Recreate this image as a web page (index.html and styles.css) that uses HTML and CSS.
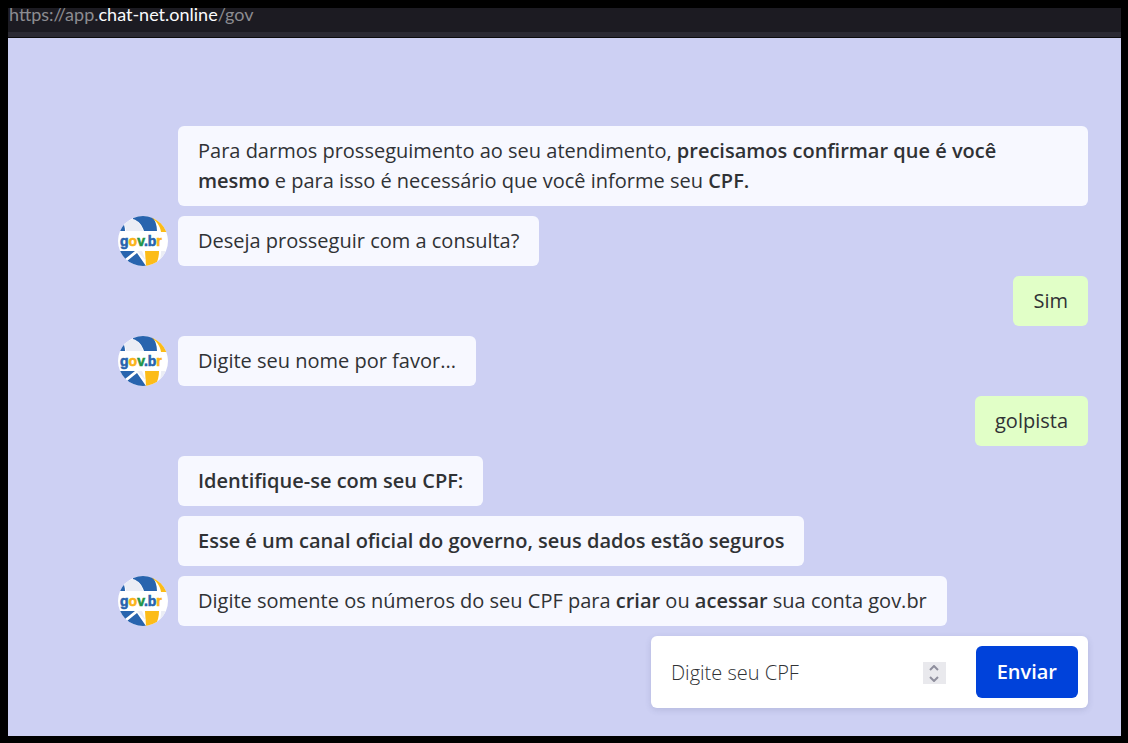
FILE: index.html
```html
<!DOCTYPE html>
<html lang="pt-BR">
<head>
<meta charset="utf-8">
<meta name="viewport" content="width=device-width, initial-scale=1">
<title>Atendimento gov.br</title>
<link rel="stylesheet" href="styles.css">
</head>
<body>
<svg class="defs" aria-hidden="true">
  <symbol id="globe" viewBox="0 0 50 50">
    <clipPath id="disc"><circle cx="25" cy="25" r="25"/></clipPath>
    <g clip-path="url(#disc)">
      <path fill="#fff" d="M0 0h50v50H0z"/>
      <path fill="#ebedf5" d="M5 7 15 3c5 2 9 7 10 12H8C8 12 7 9 5 7z"/>
      <path fill="#2864ae" d="M15 0h19c3 4 5 9 5 15H26C24 9 21 5 15 3z"/>
      <path fill="#2864ae" d="M0 6h4c2 2 3 5 3 9H0z"/>
      <path fill="#fcbc19" d="M34 0h16v16h-7C42 10 39 6 34 2z"/>
      <path fill="#2864ae" d="M0 35h17L7 43H0zM9 45l10-8 9 13H9z"/>
      <path fill="#fcbc19" d="M27 35h14c0 5-1 10-4 15h-9z"/>
      <path fill="#ebedf5" d="M43 35h7v8l-10 7c2-5 3-10 3-15zM19 35h5l4 10z"/>
    </g>
  </symbol>
</svg>
<div class="window">
  <header class="address-bar">
    <span class="url">https://app.<span class="host">chat-net.online</span>/gov</span>
  </header>
  <main class="chat">
    <div class="row bot">
      <p class="bubble">Para darmos prosseguimento ao seu atendimento, <strong>precisamos confirmar que é você mesmo</strong> e para isso é necessário que você informe seu <strong>CPF.</strong></p>
    </div>
    <div class="row">
      <svg class="avatar" viewBox="0 0 50 50" role="img" aria-label="gov.br"><use href="#globe"/><text class="logo-text" x="2" y="30">g<tspan class="gold">o</tspan><tspan class="green">v</tspan>.b<tspan class="gold">r</tspan></text></svg>
      <p class="bubble">Deseja prosseguir com a consulta?</p>
    </div>
    <div class="row user"><p class="bubble">Sim</p></div>
    <div class="row">
      <svg class="avatar" viewBox="0 0 50 50" role="img" aria-label="gov.br"><use href="#globe"/><text class="logo-text" x="2" y="30">g<tspan class="gold">o</tspan><tspan class="green">v</tspan>.b<tspan class="gold">r</tspan></text></svg>
      <p class="bubble">Digite seu nome por favor...</p>
    </div>
    <div class="row user"><p class="bubble">golpista</p></div>
    <div class="row bot"><p class="bubble"><strong>Identifique-se com seu CPF:</strong></p></div>
    <div class="row bot"><p class="bubble"><strong>Esse é um canal oficial do governo, seus dados estão seguros</strong></p></div>
    <div class="row">
      <svg class="avatar" viewBox="0 0 50 50" role="img" aria-label="gov.br"><use href="#globe"/><text class="logo-text" x="2" y="30">g<tspan class="gold">o</tspan><tspan class="green">v</tspan>.b<tspan class="gold">r</tspan></text></svg>
      <p class="bubble">Digite somente os números do seu CPF para <strong>criar</strong> ou <strong>acessar</strong> sua conta gov.br</p>
    </div>
    <form class="cpf-form">
      <input class="cpf-input" type="number" aria-label="CPF" placeholder="Digite seu CPF">
      <span class="stepper">
        <button class="step" type="button" aria-label="Aumentar"><svg class="chevron" viewBox="0 0 10 6"><path d="M1 5l4-4 4 4"/></svg></button>
        <button class="step" type="button" aria-label="Diminuir"><svg class="chevron" viewBox="0 0 10 6"><path d="M1 1l4 4 4-4"/></svg></button>
      </span>
      <button class="send" type="submit">Enviar</button>
    </form>
  </main>
</div>
</body>
</html>
```
FILE: styles.css
```css
* { box-sizing: border-box; }

body {
  margin: 0;
  padding: 8px 7px 7px 8px;
  min-height: 100vh;
  display: flex;
  background: #000;
  color: #303235;
  font: 20px/30px "Open Sans", "Noto Sans", sans-serif;
}

.defs {
  position: absolute;
  width: 0;
  height: 0;
}

.window {
  flex: 1;
  display: flex;
  flex-direction: column;
  background: #cdd0f3;
}

.address-bar {
  height: 30px;
  background: #1c1b22;
  border-bottom: 1px solid #0c0c0d;
  box-shadow: inset 0 -5px #2b2a33;
}

.url {
  display: block;
  padding-left: 1px;
  color: #8c8c91;
  font: 18px/12px Lato, "Open Sans", sans-serif;
}

.host { color: #fbfbfe; }

.chat {
  display: flex;
  flex-direction: column;
  gap: 10px;
  padding: 88px 33px 28px 110px;
}

.row {
  display: flex;
  align-items: flex-end;
  gap: 10px;
}

.bot { padding-left: 60px; }

.user { justify-content: flex-end; }

.bubble {
  margin: 0;
  padding: 10px 20px;
  border-radius: 6px;
  background: #f7f8ff;
}

.user .bubble { background: #e1ffc7; }

strong { font-weight: 600; }

.avatar {
  flex: none;
  width: 50px;
  height: 50px;
}

.logo-text {
  fill: #2864ae;
  stroke: #2864ae;
  stroke-width: 0.6;
  font: bold 14px "Liberation Sans", sans-serif;
}

.gold {
  fill: #fcb316;
  stroke: #fcb316;
}

.green {
  fill: #239447;
  stroke: #239447;
}

.cpf-form {
  align-self: flex-end;
  display: flex;
  align-items: center;
  width: 437px;
  max-width: 100%;
  padding: 10px;
  border-radius: 6px;
  background: #fff;
  box-shadow: 0 2px 6px rgb(60 66 120 / 16%);
}

.cpf-input {
  flex: 1;
  min-width: 0;
  padding: 11px 10px 9px;
  border: 0;
  outline: 0;
  background: none;
  color: #303235;
  font: inherit;
  appearance: textfield;
}

.cpf-input::placeholder {
  color: #303235;
  font-weight: 300;
  opacity: 1;
}

.stepper {
  display: flex;
  flex-direction: column;
  margin: 2px 30px 0 0;
  background: #e9e9ed;
}

.step {
  display: grid;
  place-items: center;
  width: 23px;
  height: 11px;
  padding: 0;
  border: 0;
  background: none;
}

.chevron {
  width: 10px;
  height: 6px;
  fill: none;
  stroke: #8f8f9d;
  stroke-width: 2;
}

.send {
  padding: 11px 21px;
  border: 0;
  border-radius: 6px;
  background: #0042da;
  color: #fff;
  font: 600 20px/30px "Open Sans", sans-serif;
}
```
